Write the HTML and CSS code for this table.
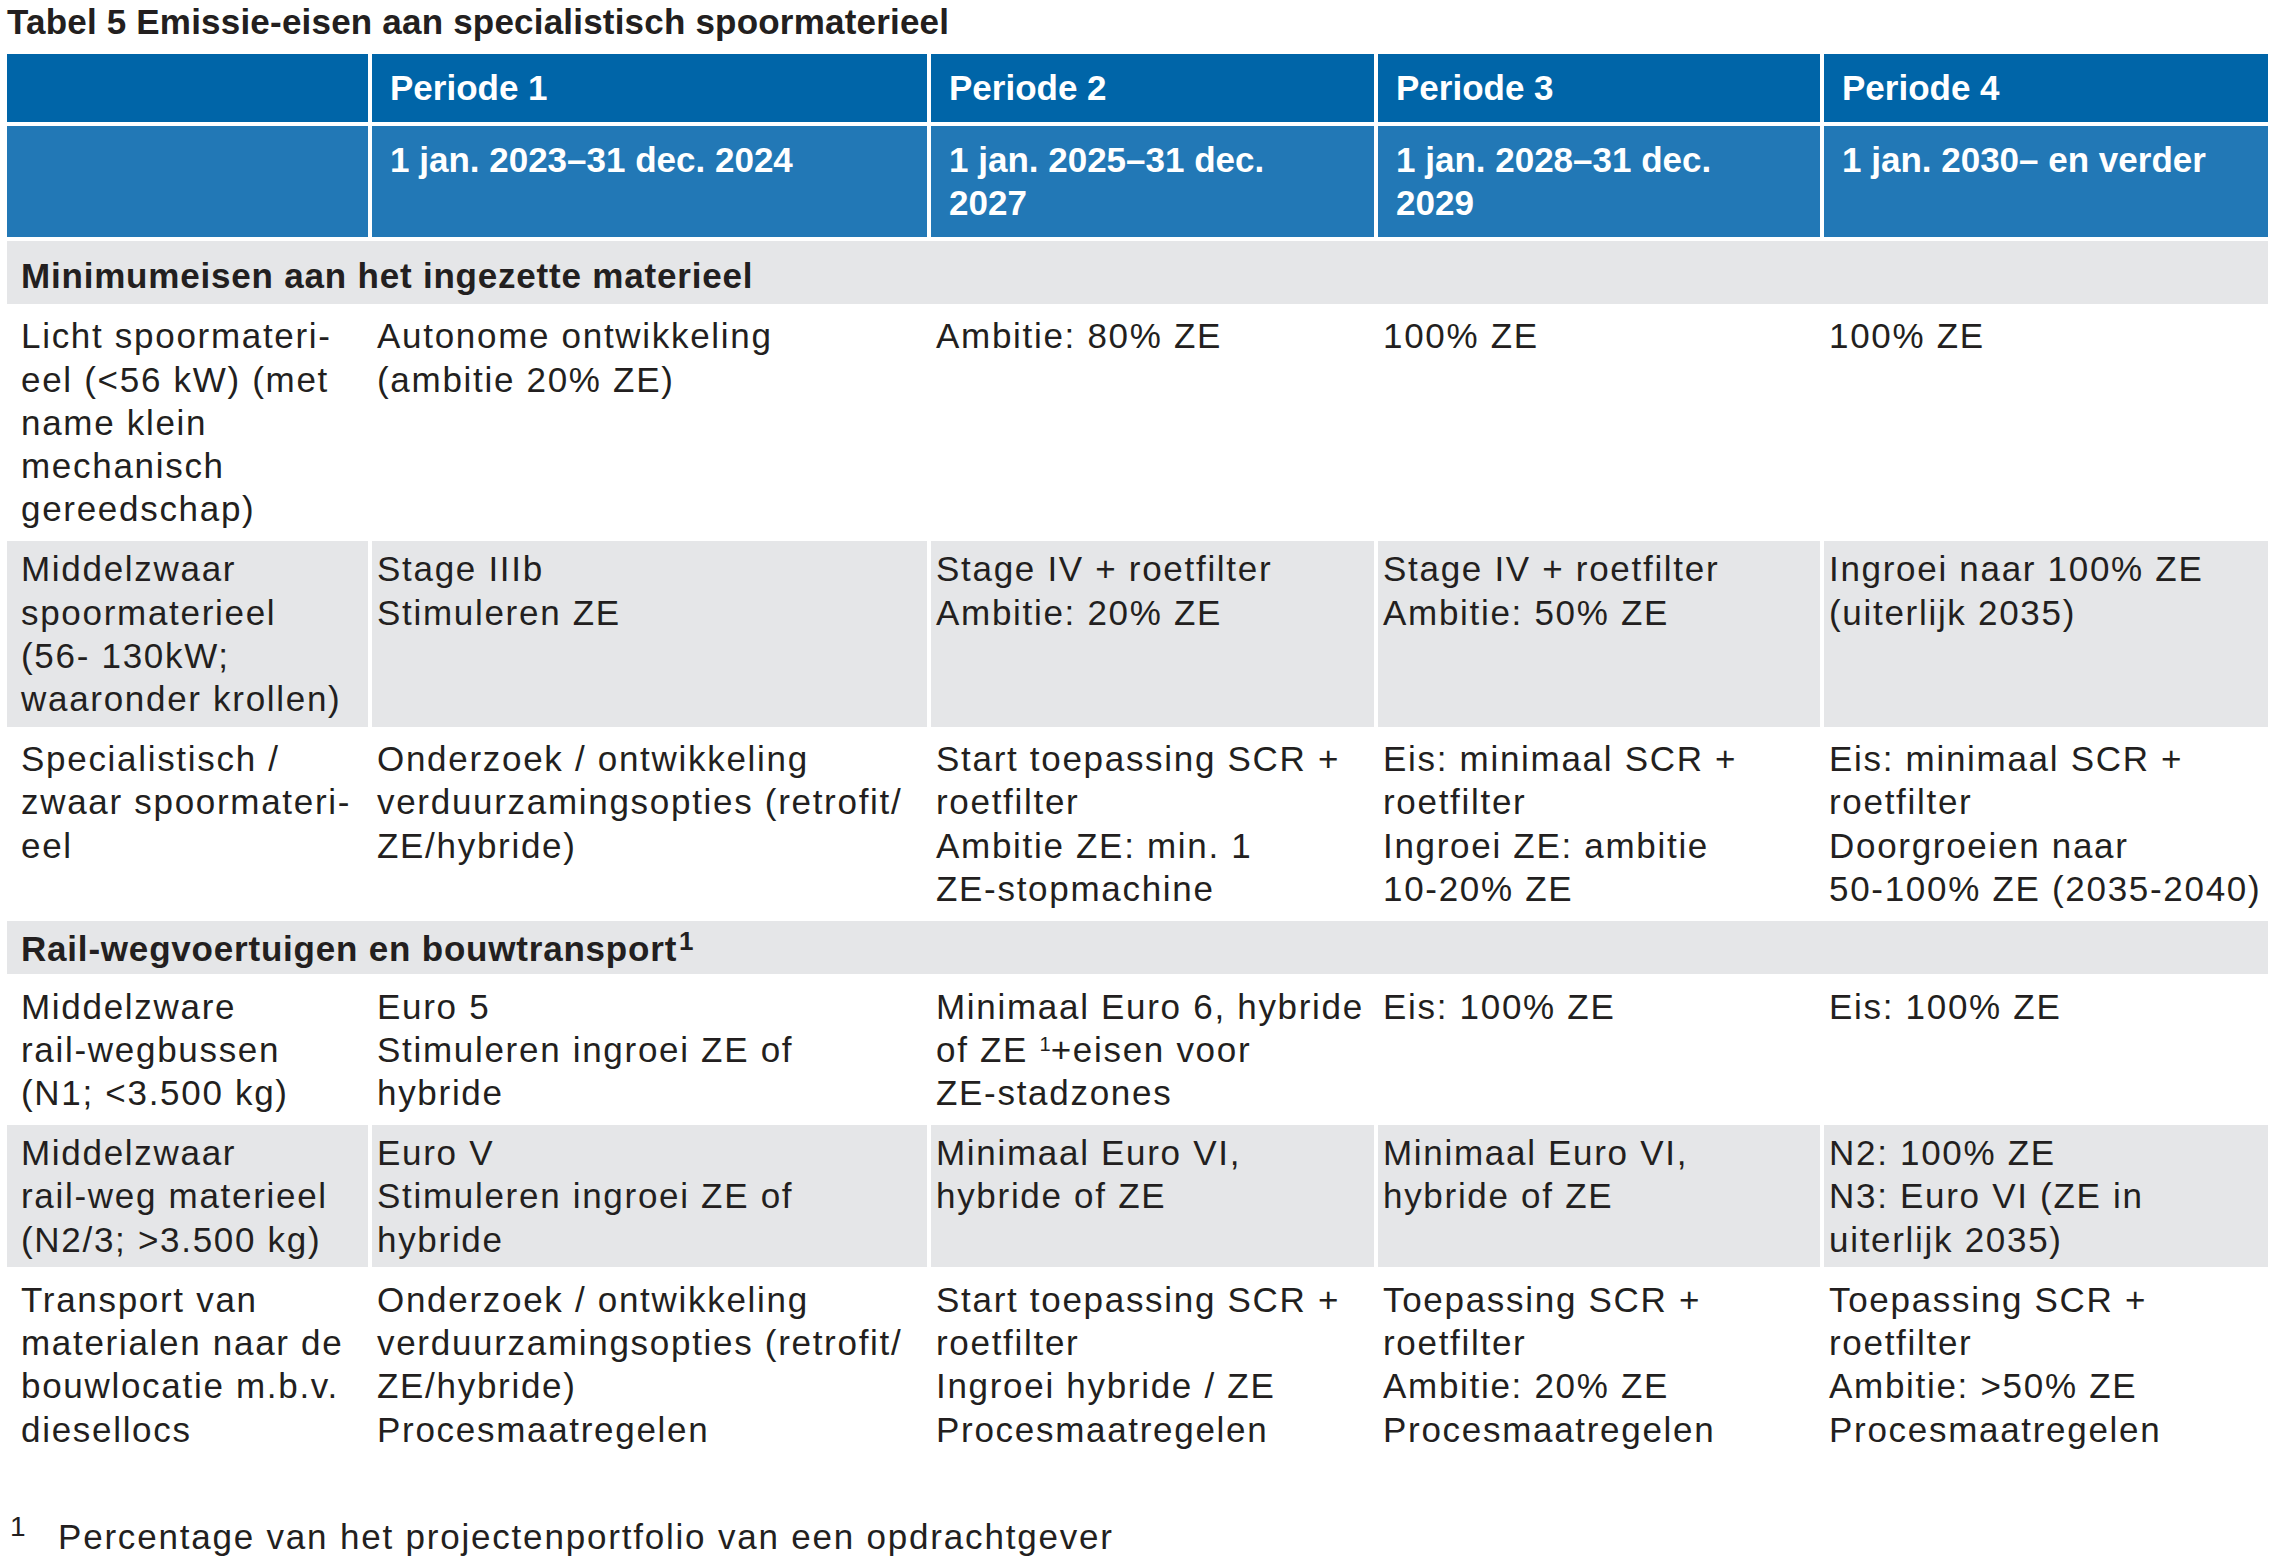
FILE: index.html
```html
<!DOCTYPE html>
<html lang="nl">
<head>
<meta charset="utf-8">
<title>Tabel 5 Emissie-eisen aan specialistisch spoormaterieel</title>
<link rel="stylesheet" href="styles.css">
</head>
<body>
<div class="page">
  <h1 class="caption">Tabel 5 Emissie-eisen aan specialistisch spoormaterieel</h1>
  <table class="emissions">
    <colgroup>
      <col class="c-cat">
      <col class="c-p1">
      <col class="c-p2">
      <col class="c-p3">
      <col class="c-p4">
    </colgroup>
    <thead>
      <tr class="head-period">
        <th></th>
        <th>Periode 1</th>
        <th>Periode 2</th>
        <th>Periode 3</th>
        <th>Periode 4</th>
      </tr>
      <tr class="head-dates">
        <th></th>
        <th>1 jan. 2023–31 dec. 2024</th>
        <th>1 jan. 2025–31 dec.<br>2027</th>
        <th>1 jan. 2028–31 dec.<br>2029</th>
        <th>1 jan. 2030– en verder</th>
      </tr>
    </thead>
    <tbody>
      <tr class="section section-first">
        <th colspan="5">Minimumeisen aan het ingezette materieel</th>
      </tr>
      <tr>
        <td>Licht spoormateri-<br>eel (&lt;56 kW) (met<br>name klein<br>mechanisch<br>gereedschap)</td>
        <td>Autonome ontwikkeling<br>(ambitie 20% ZE)</td>
        <td>Ambitie: 80% ZE</td>
        <td>100% ZE</td>
        <td>100% ZE</td>
      </tr>
      <tr class="alt">
        <td>Middelzwaar<br>spoormaterieel<br>(56- 130kW;<br>waaronder krollen)</td>
        <td>Stage IIIb<br>Stimuleren ZE</td>
        <td>Stage IV + roetfilter<br>Ambitie: 20% ZE</td>
        <td>Stage IV + roetfilter<br>Ambitie: 50% ZE</td>
        <td>Ingroei naar 100% ZE<br>(uiterlijk 2035)</td>
      </tr>
      <tr>
        <td>Specialistisch /<br>zwaar spoormateri-<br>eel</td>
        <td>Onderzoek / ontwikkeling<br>verduurzamingsopties (retrofit/<br>ZE/hybride)</td>
        <td>Start toepassing SCR +<br>roetfilter<br>Ambitie ZE: min. 1<br>ZE-stopmachine</td>
        <td>Eis: minimaal SCR +<br>roetfilter<br>Ingroei ZE: ambitie<br>10-20% ZE</td>
        <td>Eis: minimaal SCR +<br>roetfilter<br>Doorgroeien naar<br>50-100% ZE (2035-2040)</td>
      </tr>
      <tr class="section section-second">
        <th colspan="5">Rail-wegvoertuigen en bouwtransport<sup class="sec-note">1</sup></th>
      </tr>
      <tr>
        <td>Middelzware<br>rail-wegbussen<br>(N1; &lt;3.500 kg)</td>
        <td>Euro 5<br>Stimuleren ingroei ZE of<br>hybride</td>
        <td>Minimaal Euro 6, hybride<br>of ZE <sup class="cell-note">1</sup>+eisen voor<br>ZE-stadzones</td>
        <td>Eis: 100% ZE</td>
        <td>Eis: 100% ZE</td>
      </tr>
      <tr class="alt">
        <td>Middelzwaar<br>rail-weg materieel<br>(N2/3; &gt;3.500 kg)</td>
        <td>Euro V<br>Stimuleren ingroei ZE of<br>hybride</td>
        <td>Minimaal Euro VI,<br>hybride of ZE</td>
        <td>Minimaal Euro VI,<br>hybride of ZE</td>
        <td>N2: 100% ZE<br>N3: Euro VI (ZE in<br>uiterlijk 2035)</td>
      </tr>
      <tr>
        <td>Transport van<br>materialen naar de<br>bouwlocatie m.b.v.<br>diesellocs</td>
        <td>Onderzoek / ontwikkeling<br>verduurzamingsopties (retrofit/<br>ZE/hybride)<br>Procesmaatregelen</td>
        <td>Start toepassing SCR +<br>roetfilter<br>Ingroei hybride / ZE<br>Procesmaatregelen</td>
        <td>Toepassing SCR +<br>roetfilter<br>Ambitie: 20% ZE<br>Procesmaatregelen</td>
        <td>Toepassing SCR +<br>roetfilter<br>Ambitie: &gt;50% ZE<br>Procesmaatregelen</td>
      </tr>
    </tbody>
  </table>
  <p class="footnote"><span class="fn-mark">1</span>Percentage van het projectenportfolio van een opdrachtgever</p>
</div>
</body>
</html>
```

FILE: styles.css
```css
html, body {
  margin: 0;
  padding: 0;
  background: #ffffff;
}

body {
  color: #231f20;
  font-family: "Liberation Sans", Arial, sans-serif;
}

.page {
  padding: 0 7px;
}

.caption {
  margin: 0 0 11px;
  font-size: 35px;
  line-height: 43.3px;
  font-weight: 700;
  letter-spacing: 0.2px;
}

.emissions {
  border-collapse: separate;
  border-spacing: 4px;
  table-layout: fixed;
  width: 2269px;
  margin: -4px -4px -4px -4px;
}

.c-cat { width: 361px; }
.c-p1 { width: 555px; }
.c-p2 { width: 443px; }
.c-p3 { width: 442px; }
.c-p4 { width: 444px; }

.emissions th,
.emissions td {
  padding: 6.3px 5px;
  vertical-align: top;
  text-align: left;
  white-space: nowrap;
  font-size: 35px;
  line-height: 43.3px;
}

.emissions td {
  font-weight: 400;
  letter-spacing: 1.7px;
}

.emissions td:first-child {
  padding-left: 14px;
}

.head-period th {
  background: #0065a8;
  color: #ffffff;
  font-weight: 700;
  padding: 12px 18px;
}

.head-dates th {
  background: #2278b6;
  color: #ffffff;
  font-weight: 700;
  padding: 12px 18px 13px;
}

.section th {
  background: #e5e6e8;
  font-weight: 700;
  letter-spacing: 0.8px;
  padding-left: 14px;
}

.section-first th {
  padding-top: 12.5px;
  padding-bottom: 7px;
}

.section-second th {
  padding-top: 6.2px;
  padding-bottom: 4.3px;
}

.alt td {
  background: #e5e6e8;
}

.sec-note {
  font-size: 26px;
  line-height: 0;
  vertical-align: 11px;
  letter-spacing: 0;
  margin-left: 2px;
}

.cell-note {
  font-size: 20px;
  line-height: 0;
  vertical-align: 11px;
  letter-spacing: 0;
}

.footnote {
  margin: 58px 0 0;
  font-size: 35px;
  line-height: 43.3px;
  letter-spacing: 1.8px;
  white-space: nowrap;
}

.fn-mark {
  display: inline-block;
  width: 48px;
  padding-left: 3px;
  font-size: 28px;
  line-height: 0;
  letter-spacing: 0;
  vertical-align: 13px;
}
```
